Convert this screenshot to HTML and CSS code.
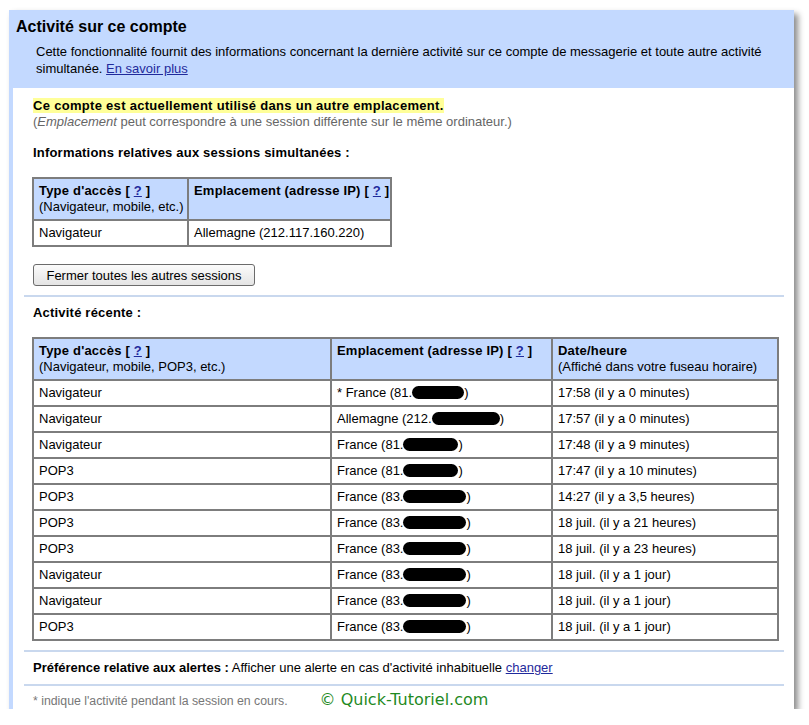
FILE: index.html
```html
<!DOCTYPE html>
<html lang="fr">
<head>
<meta charset="utf-8">
<title>Activité sur ce compte</title>
<link rel="stylesheet" href="styles.css">
</head>
<body>
<div class="window">
  <div class="header">
    <h1>Activité sur ce compte</h1>
    <p class="desc">Cette fonctionnalité fournit des informations concernant la dernière activité sur ce compte de messagerie et toute autre activité simultanée. <a href="#">En savoir plus</a></p>
  </div>
  <div class="body">
    <p class="alert"><span class="hl">Ce compte est actuellement utilisé dans un autre emplacement.</span></p>
    <p class="note">(<em>Emplacement</em> peut correspondre à une session différente sur le même ordinateur.)</p>
    <h2 class="sect first">Informations relatives aux sessions simultanées :</h2>
    <table class="grid small">
      <colgroup><col class="c1a"><col class="c1b"></colgroup>
      <tr class="head">
        <td><b>Type d'accès [ <a href="#">?</a> ]</b><br>(Navigateur, mobile, etc.)</td>
        <td><b>Emplacement (adresse IP) [ <a href="#">?</a> ]</b></td>
      </tr>
      <tr><td>Navigateur</td><td>Allemagne (212.117.160.220)</td></tr>
    </table>
    <button class="btn" type="button">Fermer toutes les autres sessions</button>
    <hr class="div">
    <h2 class="sect">Activité récente :</h2>
    <table class="grid big">
      <colgroup><col class="c2a"><col class="c2b"><col class="c2c"></colgroup>
      <tr class="head">
        <td><b>Type d'accès [ <a href="#">?</a> ]</b><br>(Navigateur, mobile, POP3, etc.)</td>
        <td><b>Emplacement (adresse IP) [ <a href="#">?</a> ]</b></td>
        <td><b>Date/heure</b><br>(Affiché dans votre fuseau horaire)</td>
      </tr>
      <tr><td>Navigateur</td><td>* France (81.<span class="blob w52"></span>)</td><td>17:58 (il y a 0 minutes)</td></tr>
      <tr><td>Navigateur</td><td>Allemagne (212.<span class="blob w68"></span>)</td><td>17:57 (il y a 0 minutes)</td></tr>
      <tr><td>Navigateur</td><td>France (81.<span class="blob w55"></span>)</td><td>17:48 (il y a 9 minutes)</td></tr>
      <tr><td>POP3</td><td>France (81.<span class="blob w55"></span>)</td><td>17:47 (il y a 10 minutes)</td></tr>
      <tr><td>POP3</td><td>France (83.<span class="blob w64"></span>)</td><td>14:27 (il y a 3,5 heures)</td></tr>
      <tr><td>POP3</td><td>France (83.<span class="blob w64"></span>)</td><td>18 juil. (il y a 21 heures)</td></tr>
      <tr><td>POP3</td><td>France (83.<span class="blob w64"></span>)</td><td>18 juil. (il y a 23 heures)</td></tr>
      <tr><td>Navigateur</td><td>France (83.<span class="blob w64"></span>)</td><td>18 juil. (il y a 1 jour)</td></tr>
      <tr><td>Navigateur</td><td>France (83.<span class="blob w64"></span>)</td><td>18 juil. (il y a 1 jour)</td></tr>
      <tr><td>POP3</td><td>France (83.<span class="blob w64"></span>)</td><td>18 juil. (il y a 1 jour)</td></tr>
    </table>
    <hr class="div d2">
    <p class="pref"><b>Préférence relative aux alertes :</b> Afficher une alerte en cas d'activité inhabituelle <a href="#">changer</a></p>
    <hr class="div d3">
    <p class="foot">* indique l'activité pendant la session en cours.<span class="mark">© Quick-Tutoriel.com</span></p>
  </div>
</div>
</body>
</html>
```
FILE: styles.css
```css
html, body {
  margin: 0;
  padding: 0;
  background: #ffffff;
}
body {
  font-family: "Liberation Sans", Arial, sans-serif;
  font-size: 13px;
  color: #000;
}
a {
  color: #1f2a9c;
  text-decoration: underline;
}
.window {
  margin: 10px 0 0 9px;
  width: 785px;
  height: 699px;
  background: #fff;
  box-shadow: 4px 4px 6px rgba(0, 0, 0, 0.45);
}
.header {
  background: #c3d9ff;
  height: 78px;
  box-sizing: border-box;
  padding: 7px 10px 0 7px;
}
.header h1 {
  margin: 0;
  font-size: 16px;
  line-height: 20px;
  font-weight: bold;
}
.desc {
  margin: 6px 0 0 20px;
  line-height: 17px;
}
.body {
  border-left: 4px solid #c3d9ff;
  padding: 0 18px 0 20px;
  height: 621px;
  box-sizing: border-box;
}
.alert {
  margin: 0;
  padding-top: 10px;
  line-height: 16px;
  font-weight: bold;
}
.hl {
  background: #ffff99;
  letter-spacing: 0.3px;
}
.note {
  margin: 0;
  line-height: 16px;
  color: #666;
}
.sect {
  margin: 8px 0 0;
  font-size: 13px;
  line-height: 16px;
  font-weight: bold;
  letter-spacing: 0.2px;
}
.sect.first {
  margin-top: 15px;
}
.grid {
  border-collapse: collapse;
  table-layout: fixed;
  margin-top: 16px;
}
.grid td {
  border: 2px solid #7d7d7d;
  padding: 4px 4px 4px 5px;
  line-height: 16px;
  vertical-align: top;
  background: #fff;
  white-space: nowrap;
  overflow: hidden;
}
.grid .head td {
  background: #c3d9ff;
}
.grid .head b {
  letter-spacing: 0.2px;
}
.small { width: 358px; margin-left: -1px; }
.big { width: 745px; margin-left: -1px; }
.c1a { width: 155px; }
.c1b { width: 203px; }
.c2a { width: 298px; }
.c2b { width: 221px; }
.c2c { width: 226px; }
.blob {
  display: inline-block;
  height: 13px;
  background: #000;
  border-radius: 7px;
  vertical-align: -2px;
}
.w52 { width: 52px; }
.w55 { width: 55px; }
.w64 { width: 63px; }
.w68 { width: 68px; }
.btn {
  display: block;
  margin-top: 17px;
  width: 222px;
  height: 22px;
  padding: 0;
  font-family: "Liberation Sans", Arial, sans-serif;
  font-size: 13px;
  color: #000;
  border: 1px solid #6b6b6b;
  border-radius: 3px;
  background: linear-gradient(#fbfbfb, #e4e4e4);
}
.div {
  border: 0;
  height: 2px;
  background: #c9d8ee;
  margin: 9px -8px 0 -9px;
}
.d2 { margin-top: 9px; }
.d3 { margin-top: 8px; }
.pref {
  margin: 8px 0 0;
  line-height: 16px;
}
.foot {
  margin: 6px 0 0;
  line-height: 16px;
  font-size: 12.3px;
  color: #777;
}
.mark {
  margin-left: 32px;
  font-family: "DejaVu Sans", Verdana, sans-serif;
  font-size: 16px;
  line-height: 16px;
  color: #1f8a1f;
}
```
